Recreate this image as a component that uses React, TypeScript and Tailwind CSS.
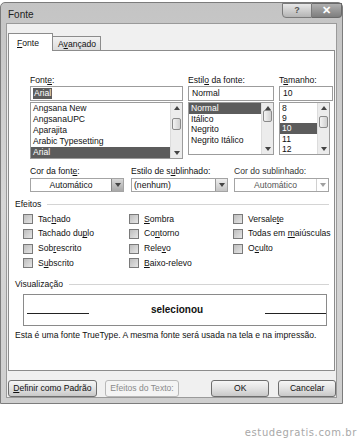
import React from "react";

const font = "font-['Liberation_Sans',Arial,sans-serif]";

function Arrow({ up = false, light = false }: { up?: boolean; light?: boolean }) {
  return (
    <svg width="6" height="4" viewBox="0 0 6 4" className="block">
      <path d={up ? "M0 4 L3 0 L6 4 Z" : "M0 0 L6 0 L3 4 Z"} fill={light ? "#a0a0a0" : "#444"} />
    </svg>
  );
}

function ListBox({
  items,
  selected,
  thumbTop,
  className,
  row,
}: {
  items: string[];
  selected: number;
  thumbTop: number;
  className: string;
  row: string;
}) {
  return (
    <div className={`flex border border-[#9c9c9c] bg-white ${className}`}>
      <div className="flex-1 overflow-hidden">
        {items.map((t, i) => (
          <div
            key={t}
            className={`${row} pl-[2px] whitespace-nowrap ${
              i === selected ? "bg-[#5c5c5c] text-white" : "text-[#111]"
            }`}
          >
            {t}
          </div>
        ))}
      </div>
      <div className="w-[12px] bg-[#ececec] border-l border-[#dcdcdc] flex flex-col items-center justify-between py-[3px]">
        <Arrow up />
        <div className="flex-1 w-full relative">
          <div
            className="absolute left-[1px] right-[1px] h-[12px] border border-[#8a8a8a] rounded-[2px] bg-gradient-to-r from-[#f4f4f4] to-[#d0d0d0]"
            style={{ top: thumbTop }}
          />
        </div>
        <Arrow />
      </div>
    </div>
  );
}

function Combo({ text, className, disabled = false, dark = false }: { text: string; className: string; disabled?: boolean; dark?: boolean }) {
  return (
    <div className={`flex h-[14px] border border-[#a4a4a4] bg-white ${className}`}>
      <div className={`flex-1 leading-[12px] ${disabled ? "text-[#555]" : "text-[#111]"} ${text.startsWith("(") ? "pl-[2px]" : "text-center"}`}>
        {text}
      </div>
      <div
        className={`w-[12px] flex items-center justify-center border-l ${
          disabled ? "border-[#d0d0d0] bg-white" : dark ? "border-[#888] bg-gradient-to-b from-[#d8d8d8] to-[#a8a8a8]" : "border-[#999] bg-gradient-to-b from-[#eee] to-[#c4c4c4]"
        }`}
      >
        <Arrow light={disabled} />
      </div>
    </div>
  );
}

function Check({ children }: { children: React.ReactNode }) {
  return (
    <div className="flex items-center h-[14.7px] gap-[5px] whitespace-nowrap">
      <div className="w-[10px] h-[10px] border border-[#7a7a7a] bg-gradient-to-br from-[#bdbdbd] to-[#e6e6e6]" />
      <span>{children}</span>
    </div>
  );
}

function Button({ children, className, disabled = false }: { children: React.ReactNode; className: string; disabled?: boolean }) {
  return (
    <div
      className={`h-[17px] rounded-[3px] border flex items-center justify-center ${
        disabled
          ? "border-[#b8b8b8] bg-[#f4f4f4] text-[#8a8a8a]"
          : "border-[#6e6e6e] bg-gradient-to-b from-[#f6f6f6] via-[#e2e2e2] to-[#c8c8c8] text-[#111]"
      } ${className}`}
    >
      {children}
    </div>
  );
}

export default function App() {
  return (
    <div className={`w-[360px] h-[438px] bg-white text-[8.6px] ${font} text-[#111] overflow-hidden`}>
      {/* window */}
      <div className="w-[343px] h-[402px] mt-[2px] border border-[#7c7c7c] bg-gradient-to-b from-[#c4c4c4] via-[#d6d6d6] to-[#cfcfcf] rounded-t-[5px] flex flex-col">
        {/* title bar */}
        <div className="h-[20px] flex items-start justify-between">
          <div className="pl-[7px] pt-[4px] text-[10px] text-[#222]">Fonte</div>
          <div className="flex">
            <div className="w-[30px] h-[15px] rounded-bl-[4px] border border-[#7a7a7a] bg-gradient-to-b from-[#e8e8e8] to-[#b4b4b4] flex items-center justify-center text-[9px] font-bold text-[#555]">
              ?
            </div>
            <div className="w-[30px] h-[15px] rounded-br-[4px] border border-l-0 border-[#6a6a6a] bg-gradient-to-b from-[#b0b0b0] to-[#7e7e7e] flex items-center justify-center text-[11px] font-bold text-white">
              ✕
            </div>
          </div>
        </div>
        {/* body */}
        <div className="flex-1 mx-[5px] mb-[5px] border border-[#9a9a9a] bg-[#f0f0f0] flex flex-col">
          {/* tabs */}
          <div className="flex items-end h-[26px] pl-[1px]">
            <div className="w-[45px] h-[18px] border border-b-0 border-[#8c8c8c] bg-white pl-[8px] leading-[18px] relative top-[1px]">
              <u>F</u>onte
            </div>
            <div className="w-[48px] h-[14px] border border-l-0 border-b-0 border-[#8c8c8c] bg-gradient-to-b from-[#f2f2f2] to-[#dcdcdc] pl-[5px] leading-[14px]">
              A<u>v</u>ançado
            </div>
          </div>
          {/* tab page */}
          <div className="h-[321px] mx-[1px] border border-[#8c8c8c] bg-white flex flex-col">
            <div className="grid grid-cols-[153px_86px_54px] gap-x-[5px] pl-[21px] pt-[24px]">
              <div>
                <div className="h-[11px] leading-[10px]">
                  Font<u>e</u>:
                </div>
                <div className="h-[15px] border border-[#9c9c9c] flex items-center pl-[2px]">
                  <span className="bg-[#5c5c5c] text-white px-[1px] leading-[11px]">Arial</span>
                </div>
                <ListBox
                  className="h-[57px] mt-[1px]"
                  row="h-[11px] leading-[11px]"
                  items={["Angsana New", "AngsanaUPC", "Aparajita", "Arabic Typesetting", "Arial"]}
                  selected={4}
                  thumbTop={8}
                />
              </div>
              <div>
                <div className="h-[11px] leading-[10px]">
                  Estil<u>o</u> da fonte:
                </div>
                <div className="h-[15px] border border-[#9c9c9c] leading-[13px] pl-[3px]">Normal</div>
                <ListBox
                  className="h-[53px] mt-[1px]"
                  row="h-[10.5px] leading-[10.5px]"
                  items={["Normal", "Itálico", "Negrito", "Negrito Itálico"]}
                  selected={0}
                  thumbTop={0}
                />
              </div>
              <div>
                <div className="h-[11px] leading-[10px]">
                  T<u>a</u>manho:
                </div>
                <div className="h-[15px] border border-[#9c9c9c] leading-[13px] pl-[3px]">10</div>
                <ListBox
                  className="h-[53px] mt-[1px] w-[51px]"
                  row="h-[10.2px] leading-[10.2px]"
                  items={["8", "9", "10", "11", "12"]}
                  selected={2}
                  thumbTop={6}
                />
              </div>
            </div>

            {/* combos */}
            <div className="flex pl-[21px] pt-[7px] gap-[7px]">
              <div className="w-[94px]">
                <div className="h-[12px] leading-[10px]">
                  Cor da font<u>e</u>:
                </div>
                <Combo className="w-[94px]" text="Automático" dark />
              </div>
              <div className="w-[97px]">
                <div className="h-[12px] leading-[10px]">
                  Estilo de s<u>u</u>blinhado:
                </div>
                <Combo className="w-[97px]" text="(nenhum)" />
              </div>
              <div className="w-[95px] ml-[-1px]">
                <div className="h-[12px] leading-[10px] text-[#333]">Cor do sublinhado:</div>
                <Combo className="w-[95px]" text="Automático" disabled />
              </div>
            </div>

            {/* effects */}
            <div className="flex items-center pl-[6px] pr-[5px] mt-[6px] gap-[6px]">
              <span>Efeitos</span>
              <div className="flex-1 h-px bg-[#d4d4d4]" />
            </div>
            <div className="grid grid-cols-[106px_104px_1fr] pl-[14px] mt-[1px]">
              <div>
                <Check>
                  Tac<u>h</u>ado
                </Check>
                <Check>
                  Tachado du<u>p</u>lo
                </Check>
                <Check>
                  Sob<u>r</u>escrito
                </Check>
                <Check>
                  S<u>u</u>bscrito
                </Check>
              </div>
              <div>
                <Check>
                  <u>S</u>ombra
                </Check>
                <Check>
                  Co<u>n</u>torno
                </Check>
                <Check>
                  Rele<u>v</u>o
                </Check>
                <Check>
                  <u>B</u>aixo-relevo
                </Check>
              </div>
              <div>
                <Check>
                  Versale<u>t</u>e
                </Check>
                <Check>
                  Todas em <u>m</u>aiúsculas
                </Check>
                <Check>
                  O<u>c</u>ulto
                </Check>
              </div>
            </div>

            {/* preview */}
            <div className="flex items-center pl-[6px] pr-[5px] mt-[7px] gap-[6px]">
              <span>Visualização</span>
              <div className="flex-1 h-px bg-[#d4d4d4]" />
            </div>
            <div className="ml-[14px] mr-[7px] mt-[3px] h-[32px] border border-[#8a8a8a] flex items-center justify-between">
              <div className="w-[62px] h-px bg-[#222] ml-[3px] mt-[8px]" />
              <span className="text-[10px] font-semibold">selecionou</span>
              <div className="w-[61px] h-px bg-[#222] mt-[8px]" />
            </div>
            <div className="pl-[6px] mt-[3px] whitespace-nowrap">
              Esta é uma fonte TrueType. A mesma fonte será usada na tela e na impressão.
            </div>
          </div>

          {/* buttons */}
          <div className="flex items-center pt-[9px] pl-[1px]">
            <Button className="w-[89px] border-[#4a4a4a]">
              <u>D</u>efinir como Padrão
            </Button>
            <Button className="w-[75px] ml-[8px]" disabled>
              Efeitos do Texto:
            </Button>
            <Button className="w-[58px] ml-[32px]">OK</Button>
            <Button className="w-[58px] ml-[9px]">Cancelar</Button>
          </div>
        </div>
      </div>
      {/* watermark */}
      <div className="flex justify-end pr-[3px] pt-[21px] text-[10px] tracking-[0.6px] text-[#a8a8a8] font-['DejaVu_Sans',sans-serif]">
        estudegratis.com.br
      </div>
    </div>
  );
}
